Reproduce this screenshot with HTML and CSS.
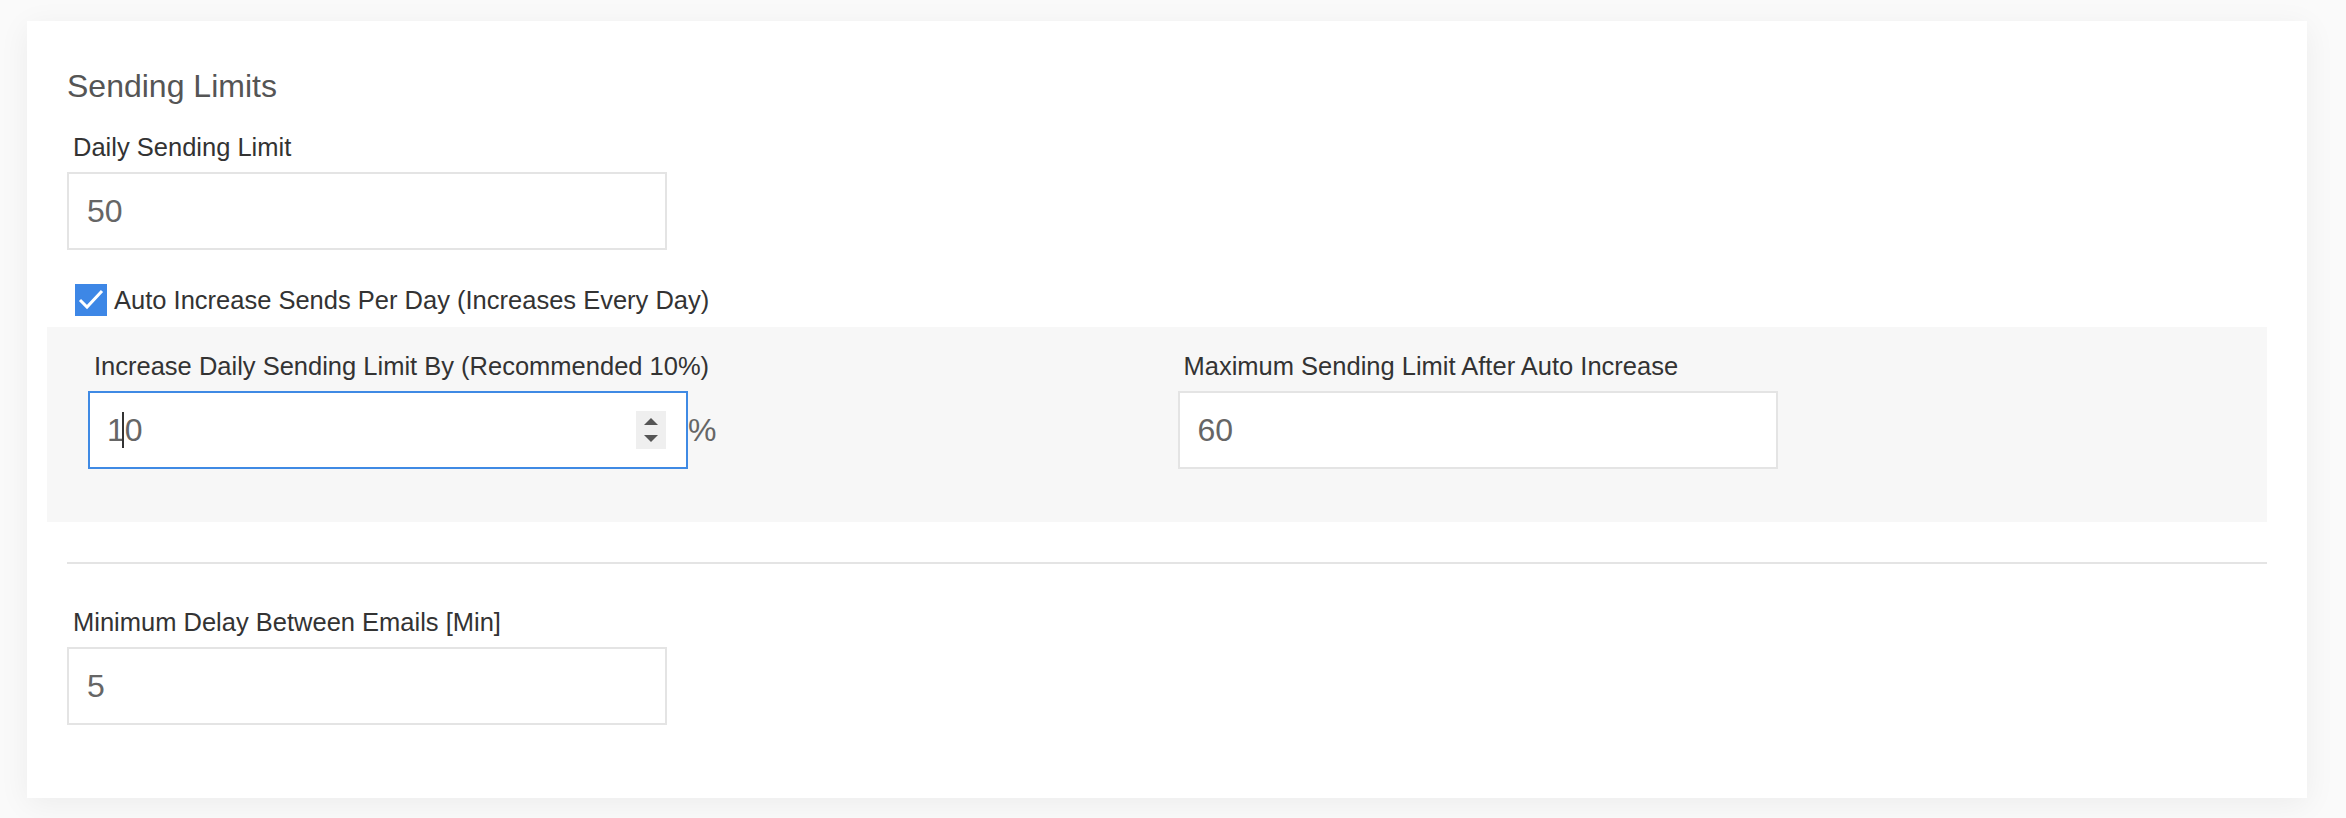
FILE: index.html
```html
<!DOCTYPE html>
<html lang="en">
<head>
    <meta charset="UTF-8">
    <meta name="viewport" content="width=device-width, initial-scale=1.0">
    <title>Sending Limits</title>
    <link rel="stylesheet" href="styles.css">
</head>
<body>

    <div class="card">
        <h2 class="card-title">Sending Limits</h2>

        <div class="field">
            <label class="field-label" for="dailyLimit">Daily Sending Limit</label>
            <input type="text" id="dailyLimit" class="text-input" value="50">
        </div>

        <label class="check-row">
            <span class="check-box">
                <svg width="32" height="32" viewBox="0 0 32 32">
                    <rect width="32" height="32" fill="#3d87e6"/>
                    <polyline points="5,16 12,23 27,7" fill="none" stroke="#fff" stroke-width="3"/>
                </svg>
            </span>
            <span class="check-label">Auto Increase Sends Per Day (Increases Every Day)</span>
        </label>

        <div class="auto-panel">
            <div class="field">
                <label class="field-label">Increase Daily Sending Limit By (Recommended 10%)</label>
                <div class="unit-row">
                    <div class="text-input is-focused">
                        <span class="value">1<span class="caret"></span>0</span>
                        <span class="spinner">
                            <svg width="30" height="38" viewBox="0 0 30 38">
                                <polygon points="8,14 22,14 15,7" fill="#555"/>
                                <polygon points="8,24 22,24 15,31" fill="#555"/>
                            </svg>
                        </span>
                    </div>
                    <span class="unit">%</span>
                </div>
            </div>

            <div class="field">
                <label class="field-label" for="maxLimit">Maximum Sending Limit After Auto Increase</label>
                <input type="text" id="maxLimit" class="text-input" value="60">
            </div>
        </div>

        <hr class="divider">

        <div class="field">
            <label class="field-label" for="minDelay">Minimum Delay Between Emails [Min]</label>
            <input type="text" id="minDelay" class="text-input" value="5">
        </div>
    </div>

</body>
</html>
```

FILE: styles.css
```css
body {
    font-family: 'Liberation Sans', Arial, sans-serif;
    margin: 0;
    padding: 21px 0 20px 27px;
    background-color: #fafafa;
}

.card {
    width: 2280px;
    box-sizing: border-box;
    background-color: #fff;
    padding: 45px 40px 73px 40px;
    box-shadow: 0 6px 30px rgba(0, 0, 0, 0.06);
}

.card-title {
    font-size: 32px;
    line-height: 40px;
    font-weight: normal;
    color: #555;
    margin: 0 0 25px 0;
}

.field-label {
    display: block;
    padding-left: 6px;
    font-size: 25.5px;
    line-height: 32px;
    color: #333;
    margin-bottom: 9px;
}

.text-input {
    display: block;
    width: 600px;
    height: 78px;
    box-sizing: border-box;
    padding: 0 18px;
    border: 2px solid #e4e4e4;
    background-color: #fff;
    font-family: 'Liberation Sans', Arial, sans-serif;
    font-size: 32px;
    color: #666;
    outline: none;
    margin: 0;
}

.check-row {
    display: flex;
    align-items: center;
    height: 32px;
    margin-top: 34px;
    padding-left: 8px;
}

.check-box {
    display: block;
    width: 32px;
    height: 32px;
}

.check-box svg {
    display: block;
}

.check-label {
    margin-left: 7px;
    font-size: 25.5px;
    line-height: 32px;
    color: #333;
}

.auto-panel {
    margin: 11px 0 0 -20px;
    padding: 23px 0 53px 41px;
    background-color: #f7f7f7;
    display: grid;
    grid-template-columns: 1fr 1fr;
}

.unit-row {
    display: flex;
    align-items: center;
}

.text-input.is-focused {
    display: flex;
    align-items: center;
    justify-content: space-between;
    padding: 0 20px 0 17px;
    border-color: #3f8ae4;
}

.value {
    display: flex;
    align-items: center;
}

.caret {
    display: inline-block;
    width: 2px;
    height: 36px;
    margin: 0 1px 0 -3px;
    background-color: #333;
}

.spinner {
    display: block;
    width: 30px;
    height: 38px;
    background-color: #efefef;
}

.spinner svg {
    display: block;
}

.unit {
    font-size: 32px;
    color: #666;
    margin-left: 0;
}

.divider {
    border: none;
    height: 2px;
    background-color: #e4e4e4;
    margin: 40px 0 42px 0;
}
```
